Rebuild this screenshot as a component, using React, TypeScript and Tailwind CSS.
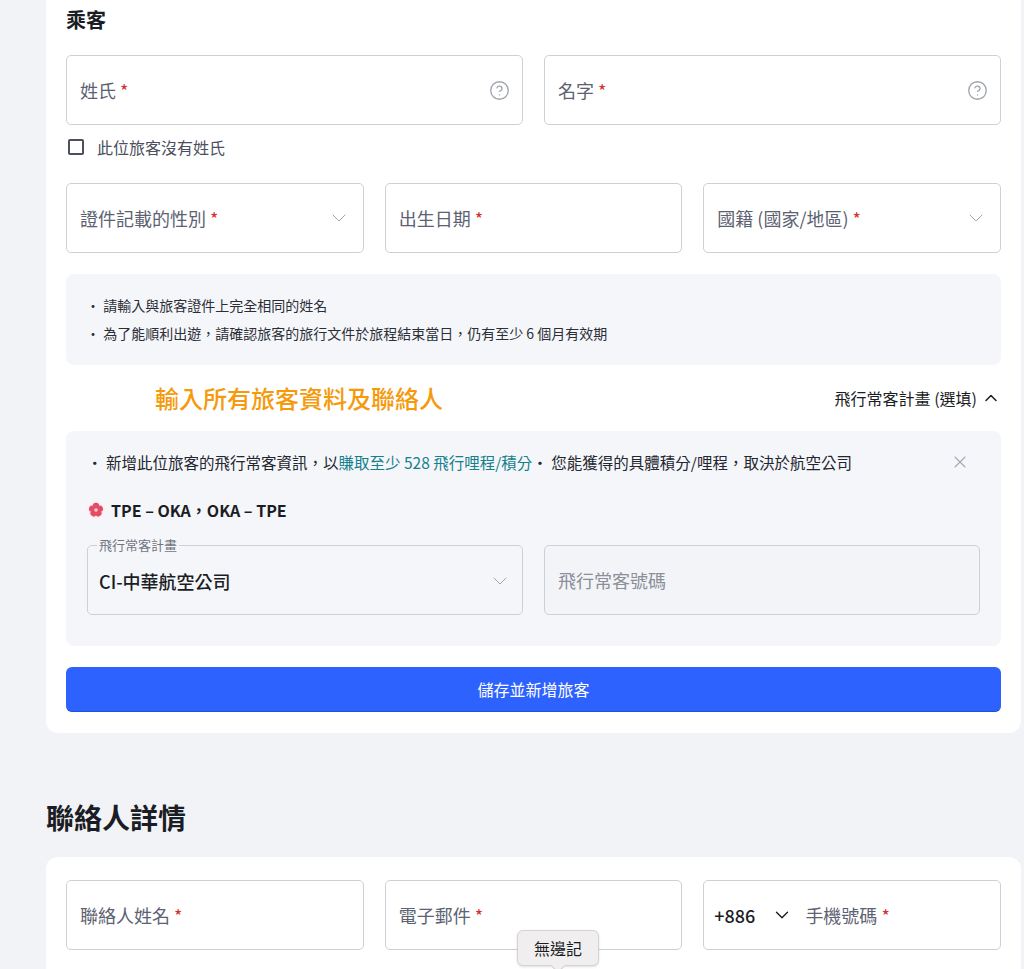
import { ChevronDown, ChevronUp, CircleHelp, X } from 'lucide-react'

const font = { fontFamily: '"Noto Sans CJK TC", "Noto Sans", sans-serif' }

function Req() {
  return <span className="ml-1 text-[#d1302b]">*</span>
}

function Field({
  label,
  help,
  select,
  className = '',
}: {
  label: string
  help?: boolean
  select?: boolean
  className?: string
}) {
  return (
    <div
      className={`flex h-[70px] items-center justify-between rounded-[5px] border border-[#cdd0d7] bg-white pl-[13px] pr-[12px] ${className}`}
    >
      <span className="text-[18px] text-[#5c6271]">
        {label}
        <Req />
      </span>
      {help && <CircleHelp className="h-[21px] w-[21px] text-[#9ea3ad]" strokeWidth={1.5} />}
      {select && <ChevronDown className="h-[24px] w-[24px] text-[#a2a6af]" strokeWidth={1} />}
    </div>
  )
}

function Blossom() {
  return (
    <svg width="18" height="18" viewBox="0 0 20 20" className="mr-[6px]">
      <circle cx="10" cy="10" r="10" fill="#fdeef0" />
      {[0, 72, 144, 216, 288].map((a) => (
        <circle
          key={a}
          cx="10"
          cy="5.6"
          r="3.6"
          fill="#e04f67"
          transform={`rotate(${a} 10 10)`}
        />
      ))}
      <circle cx="10" cy="10" r="2" fill="#f8c6cf" />
    </svg>
  )
}

export default function App() {
  return (
    <div className="relative min-h-screen overflow-hidden bg-[#f2f3f7] pl-[46px]" style={font}>
      {/* Passenger card */}
      <div className="w-[975px] rounded-b-xl bg-white px-5 pb-[21px] pt-[6px]">
        <h2 className="mb-[21px] text-[20px] font-bold leading-[28px] text-[#1b1d24]">乘客</h2>

        <div className="grid grid-cols-2 gap-[21px]">
          <Field label="姓氏" help />
          <Field label="名字" help />
        </div>

        <label className="mt-[12px] flex h-[20px] items-center gap-[13px] pl-[2px]">
          <span className="h-[16px] w-[16px] rounded-[2px] border-2 border-[#4b505c]" />
          <span className="text-[16px] text-[#4b505c]">此位旅客沒有姓氏</span>
        </label>

        <div className="mt-[26px] grid grid-cols-3 gap-[21px]">
          <Field label="證件記載的性別" select />
          <Field label="出生日期" />
          <Field label="國籍 (國家/地區)" select />
        </div>

        <div className="mt-[21px] h-[91px] rounded-lg bg-[#f5f6fa] px-[20px] pt-[17px] text-[14px] leading-[28px] text-[#2b2e36]">
          <p>· 請輸入與旅客證件上完全相同的姓名</p>
          <p>· 為了能順利出遊，請確認旅客的旅行文件於旅程結束當日，仍有至少 6 個月有效期</p>
        </div>

        <div className="flex h-[66px] items-center justify-between">
          <span className="pl-[89px] text-[24px] font-medium text-[#f59a0c]">輸入所有旅客資料及聯絡人</span>
          <button className="flex items-center gap-[4px] text-[16px] text-[#1b1d24]">
            飛行常客計畫 (選填)
            <ChevronUp className="h-[20px] w-[20px]" strokeWidth={1.8} />
          </button>
        </div>

        {/* Frequent flyer */}
        <div className="rounded-lg bg-[#f5f6fa] px-[21px] pb-[31px] pt-[20px]">
          <div className="flex items-center justify-between text-[15.5px] leading-[22px] text-[#23262e]">
            <p>
              · 新增此位旅客的飛行常客資訊，以<span className="text-[#167f8c]">賺取至少 528 飛行哩程/積分</span>· 您能獲得的具體積分/哩程，取決於航空公司
            </p>
            <X className="mr-[10px] h-[20px] w-[20px] text-[#a3a7b0]" strokeWidth={1.3} />
          </div>

          <div className="mt-[26px] flex items-center text-[16px] font-bold leading-[22px] text-[#1b1d24]">
            <Blossom />
            TPE – OKA，OKA – TPE
          </div>

          <div className="mt-[24px] grid grid-cols-2 gap-[21px]">
            <fieldset className="-mt-[9px] flex h-[79px] items-center justify-between rounded-[5px] border border-[#cdd0d7] pl-[11px] pr-[10px]">
              <legend className="ml-[-2px] px-[2px] text-[13px] leading-[18px] text-[#70757f]">飛行常客計畫</legend>
              <span className="-mt-[6px] text-[18px] font-medium text-[#1b1d24]">CI-中華航空公司</span>
              <ChevronDown className="-mt-[6px] h-[24px] w-[24px] text-[#a2a6af]" strokeWidth={1} />
            </fieldset>
            <div className="flex h-[70px] items-center rounded-[5px] border border-[#cdd0d7] bg-[#f3f4f7] pl-[13px]">
              <span className="text-[18px] text-[#8a8f99]">飛行常客號碼</span>
            </div>
          </div>
        </div>

        <button className="mt-[21px] h-[45px] w-full rounded-md border-b border-[#2450d0] bg-[#2e62ff] text-[16px] text-white">
          儲存並新增旅客
        </button>
      </div>

      {/* Contact */}
      <h2 className="mt-[64px] text-[28px] font-bold leading-[40px] text-[#1b1d24]">聯絡人詳情</h2>

      <div className="relative mt-[20px] w-[975px] rounded-t-xl bg-white px-5 pb-[30px] pt-[23px]">
        <div className="grid grid-cols-3 gap-[21px]">
          <Field label="聯絡人姓名" />
          <Field label="電子郵件" />
          <div className="flex h-[70px] items-center rounded-[5px] border border-[#cdd0d7] bg-white pl-[10px]">
            <span className="text-[18px] font-medium text-[#1b1d24]">+886</span>
            <ChevronDown className="ml-[16px] h-[22px] w-[22px] text-[#1b1d24]" strokeWidth={1.5} />
            <span className="ml-[12px] text-[18px] text-[#5c6271]">
              手機號碼
              <Req />
            </span>
          </div>
        </div>

        <div className="absolute left-[471px] top-[73px]">
          <div className="relative rounded-md border border-[#d4d2d2] bg-[#f0eeee] px-[16px] py-[4px] text-[16px] leading-[26px] text-[#1b1d24] shadow-sm">
            無邊記
            <span className="absolute -bottom-[6px] left-1/2 h-[10px] w-[10px] -translate-x-1/2 rotate-45 border-b border-r border-[#d4d2d2] bg-[#f0eeee]" />
          </div>
        </div>
      </div>
    </div>
  )
}
